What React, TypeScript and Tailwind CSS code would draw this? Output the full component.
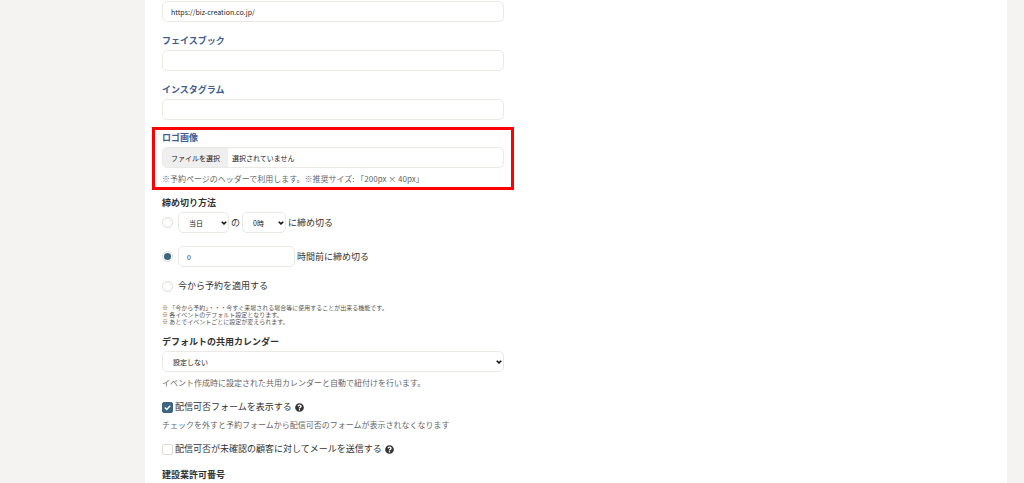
import React, { useState } from 'react';
import { FaQuestionCircle } from 'react-icons/fa';

type DeadlineType = 'date' | 'hours' | 'now';

interface TextFieldProps {
  id: string;
  label: string;
  value: string;
  onChange: (value: string) => void;
}

const fieldClass =
  'block h-[21px] w-full rounded-[5px] border border-[#ebe9e4] bg-white px-2 text-[7px] text-[#222] outline-none focus:border-[#3d6480]';
const radioClass =
  'relative m-0 size-[11px] shrink-0 appearance-none rounded-full border border-[#dedbd5] bg-white checked:before:absolute checked:before:inset-[1px] checked:before:rounded-full checked:before:bg-[#3d6480]';

const TextField: React.FC<TextFieldProps> = ({ id, label, value, onChange }) => (
  <div className="mt-[13px]">
    <label htmlFor={id} className="mb-[3px] block font-bold text-[#3f5f92]">
      {label}
    </label>
    <input
      id={id}
      type="text"
      value={value}
      onChange={(e) => onChange(e.target.value)}
      className={fieldClass}
    />
  </div>
);

interface SelectProps {
  id?: string;
  label?: string;
  options: string[];
  className?: string;
}

const Select: React.FC<SelectProps> = ({ id, label, options, className }) => (
  <div className={`relative ${className ?? ''}`}>
    <select
      id={id}
      aria-label={label}
      className="block h-[21px] w-full appearance-none rounded-[5px] border border-[#ebe9e4] bg-white pr-3 pl-[10px] text-[7px] text-[#222] outline-none"
    >
      {options.map((option) => (
        <option key={option}>{option}</option>
      ))}
    </select>
    <svg
      viewBox="0 0 10 7"
      className="pointer-events-none absolute top-[9px] right-[2px] h-[4px] w-[6px]"
      fill="none"
      stroke="#111"
      strokeWidth="2.6"
    >
      <path d="M1 1.2 L5 5 L9 1.2" />
    </svg>
  </div>
);

interface CheckFieldProps {
  label: string;
  help: string;
  checked: boolean;
  onChange: (checked: boolean) => void;
}

const CheckField: React.FC<CheckFieldProps> = ({ label, help, checked, onChange }) => (
  <div className="mt-3 flex h-3 items-center">
    <label className="flex items-center gap-[2px]">
      <span className="relative size-[11px] shrink-0">
        <input
          type="checkbox"
          checked={checked}
          onChange={(e) => onChange(e.target.checked)}
          className="block size-[11px] appearance-none rounded-[2px] border border-[#dedbd5] bg-white checked:border-[#3d6480] checked:bg-[#3d6480]"
        />
        {checked && (
          <svg
            viewBox="0 0 11 11"
            className="pointer-events-none absolute inset-0"
            fill="none"
            stroke="#fff"
            strokeWidth="1.4"
          >
            <path d="M2.8 5.6 L4.7 7.4 L8.2 3.8" />
          </svg>
        )}
      </span>
      {label}
    </label>
    <button type="button" aria-label={help} className="ml-[3px]">
      <FaQuestionCircle className="size-[9px] text-[#333]" />
    </button>
  </div>
);

const hours = Array.from({ length: 24 }, (_, i) => `${i}時`);

const App: React.FC = () => {
  const [website, setWebsite] = useState('https://biz-creation.co.jp/');
  const [facebook, setFacebook] = useState('');
  const [instagram, setInstagram] = useState('');
  const [fileName, setFileName] = useState('');
  const [deadline, setDeadline] = useState<DeadlineType>('hours');
  const [hoursBefore, setHoursBefore] = useState('0');
  const [showForm, setShowForm] = useState(true);
  const [sendMail, setSendMail] = useState(false);

  return (
    <div className="flex min-h-screen bg-[#f4f3f1] pr-[17px] pl-[145px] font-['Noto_Sans_CJK_JP','Noto_Sans',sans-serif] text-[9px] leading-[12px] text-[#333]">
      <main className="flex-1 bg-white px-[17px] pt-px">
        <form className="w-full max-w-[342px]">
          <input
            type="text"
            aria-label="ホームページ"
            value={website}
            onChange={(e) => setWebsite(e.target.value)}
            className={fieldClass}
          />
          <TextField id="facebook" label="フェイスブック" value={facebook} onChange={setFacebook} />
          <TextField id="instagram" label="インスタグラム" value={instagram} onChange={setInstagram} />

          {/* Logo upload */}
          <div className="-mx-[10px] mt-[7px] border-[3px] border-[#fe0000] px-[7px] py-[2px]">
            <label htmlFor="logo" className="block font-bold text-[#3f5f92]">
              ロゴ画像
            </label>
            <label className="mt-[3px] flex h-[21px] items-stretch overflow-hidden rounded-[5px] border border-[#ebe9e4] text-[7px] text-[#222]">
              <input
                id="logo"
                type="file"
                accept="image/*"
                className="sr-only"
                onChange={(e) => setFileName(e.target.files?.[0]?.name ?? '')}
              />
              <span className="flex items-center bg-[#efefef] px-2">ファイルを選択</span>
              <span className="flex items-center pl-1">{fileName || '選択されていません'}</span>
            </label>
            <p className="mt-[5px] text-[8px] text-[#666]">
              ※予約ページのヘッダーで利用します。※推奨サイズ: 「200px × 40px」
            </p>
          </div>

          {/* Deadline */}
          <fieldset className="mt-[7px]">
            <legend className="font-bold">締め切り方法</legend>
            <div className="mt-[3px] flex items-center">
              <input
                type="radio"
                name="deadline"
                aria-label="日時で締め切る"
                checked={deadline === 'date'}
                onChange={() => setDeadline('date')}
                className={radioClass}
              />
              <Select label="締め切り日" options={['当日', '前日', '2日前']} className="ml-[5px] w-[51px]" />
              <span className="mx-[2px]">の</span>
              <Select label="締め切り時刻" options={hours} className="w-[44px]" />
              <span className="ml-[2px]">に締め切る</span>
            </div>
            <div className="mt-[13px] flex items-center">
              <input
                type="radio"
                name="deadline"
                aria-label="時間前に締め切る"
                checked={deadline === 'hours'}
                onChange={() => setDeadline('hours')}
                className={radioClass}
              />
              <div className="ml-[5px] w-[117px]">
                <input
                  id="hours-before"
                  type="text"
                  value={hoursBefore}
                  onChange={(e) => setHoursBefore(e.target.value)}
                  className={fieldClass}
                />
              </div>
              <label htmlFor="hours-before" className="ml-[2px]">
                時間前に締め切る
              </label>
            </div>
            <label className="mt-[13px] flex items-center gap-[5px]">
              <input
                type="radio"
                name="deadline"
                checked={deadline === 'now'}
                onChange={() => setDeadline('now')}
                className={radioClass}
              />
              今から予約を適用する
            </label>
            <div className="mt-3 text-[6px] leading-[7px] text-[#555]">
              <p>※ 「今から予約」・・・今すぐ来場される場合等に使用することが出来る機能です。</p>
              <p>※ 各イベントのデフォルト設定となります。</p>
              <p>※ あとでイベントごとに設定が変えられます。</p>
            </div>
          </fieldset>

          {/* Shared calendar */}
          <div className="mt-[11px]">
            <label htmlFor="calendar" className="mb-[3px] block font-bold">
              デフォルトの共用カレンダー
            </label>
            <Select id="calendar" options={['設定しない']} />
            <p className="mt-[5px] text-[8px] text-[#666]">
              イベント作成時に設定された共用カレンダーと自動で紐付けを行います。
            </p>
          </div>

          <CheckField
            label="配信可否フォームを表示する"
            help="配信可否フォームについて"
            checked={showForm}
            onChange={setShowForm}
          />
          <p className="mt-[6px] text-[8px] text-[#666]">
            チェックを外すと予約フォームから配信可否のフォームが表示されなくなります
          </p>
          <CheckField
            label="配信可否が未確認の顧客に対してメールを送信する"
            help="メール送信について"
            checked={sendMail}
            onChange={setSendMail}
          />

          <h2 className="mt-[14px] font-bold">建設業許可番号</h2>
        </form>
      </main>
    </div>
  );
};

export default App;
